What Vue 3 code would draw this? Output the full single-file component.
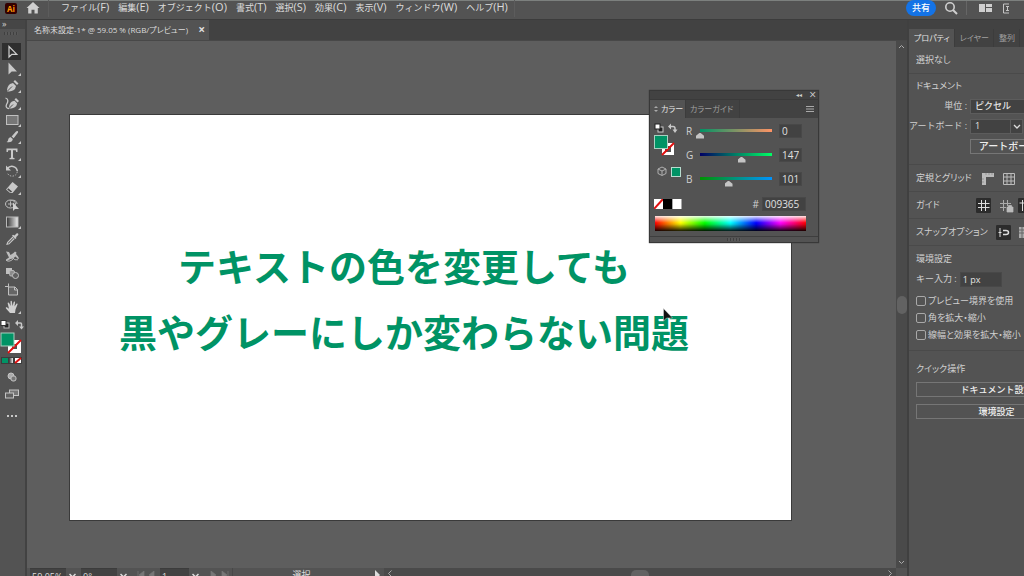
<script setup>
import { ref } from 'vue'

const menus = [
  ['ファイル', 'F'], ['編集', 'E'], ['オブジェクト', 'O'], ['書式', 'T'], ['選択', 'S'],
  ['効果', 'C'], ['表示', 'V'], ['ウィンドウ', 'W'], ['ヘルプ', 'H'],
]

const tools = [
  { name: '選択', sub: false, art: '<path d="M5 2.5v10.5l2.8-2.6h5z" fill="none" stroke="#d0d0d0" stroke-width="1.2"/>' },
  { name: 'ダイレクト選択', sub: true, art: '<path d="M4.5 1.5v12l3.2-3h5.3z" fill="#c8c8c8"/>' },
  { name: 'ペン', sub: true, art: '<path d="M3 13.5c0-3 .7-6 3-7.500l3-1 3 3-1 3c-1.700 2-5 2.500-8 2.500z" fill="#c8c8c8"/><path d="M9.500 3.500l1.500-1.500 3.500 3.500-1.500 1.500z" fill="#c8c8c8"/><path d="M3 13.500L8 8.500" stroke="#535353"/>' },
  { name: '曲線', sub: true, art: '<path d="M5 13.500c0-3 .7-5.500 3-7l2.500-.8 2.700 2.800-1 2.500c-1.700 2-4.200 2.500-7.200 2.500z" fill="#c8c8c8"/><path d="M10.500 4.500l1.500-1.500 3 3-1.500 1.500z" fill="#c8c8c8"/><path d="M5 13.500l4-4" stroke="#535353"/><path d="M1.500 3c3.500 1 2.500 4 1 6.500-1 2 0 4 2.500 4" fill="none" stroke="#c8c8c8" stroke-width="1.300"/>' },
  { name: '長方形', sub: true, art: '<rect x="2.500" y="3.500" width="11.500" height="9" fill="#777" stroke="#c0c0c0"/>' },
  { name: 'ブラシ', sub: true, art: '<path d="M13.500 2c.9.700.7 1.400 0 2.300L9.700 9.200 7.600 7.400 12 2.600c.5-.6 1-.9 1.500-.6z" fill="#c8c8c8"/><path d="M6.800 8.200l2 1.800c0 2.500-3 4-6.300 3 1.700-.6 1.300-2 2-3.300.5-1 1.300-1.500 2.300-1.500z" fill="#c8c8c8"/>' },
  { name: '文字', sub: true, art: '<path d="M2.500 2.500h11v3.500h-1.300l-.5-1.700H9v7.400l1.500.4V13.300h-5v-1.200l1.500-.4V4.300H4.300L3.800 6H2.500z" fill="#c8c8c8"/>' },
  { name: '回転', sub: true, art: '<path d="M3.500 5.500C6 2 12.500 2.700 13.300 8" fill="none" stroke="#c8c8c8" stroke-width="1.500"/><path d="M2 2.500v5h5z" fill="#c8c8c8"/><path d="M13.300 8.500c-.5 5.500-8 6.300-9.900 1.500" fill="none" stroke="#b0b0b0" stroke-dasharray="1.500 1.300"/>' },
  { name: '消しゴム', sub: true, art: '<path d="M8.500 2l5.500 4.500-5.500 6.500H6L2 9.500z" fill="#c8c8c8"/><path d="M4.300 8.200l3.800 3.200-1.300 1.200-3.600-3z" fill="#4a4a4a"/>' },
  { name: 'シェイプ形成', sub: false, art: '<ellipse cx="6.500" cy="7" rx="5" ry="4" fill="none" stroke="#c0c0c0"/><path d="M4 7h6M6.500 4.500v5M6 4c4-2 7 0 7 3" stroke="#b8b8b8" fill="none"/><path d="M9 5.500v8.500l2-2h4z" fill="#d0d0d0"/>' },
  { name: 'グラデーション', sub: true, art: '<rect x="2.500" y="3" width="11.500" height="10" fill="url(#toolGradient)" stroke="#b8b8b8"/>' },
  { name: 'スポイト', sub: false, art: '<path d="M10.500 4.500l2-2c1.500-1 2.500.5 1.500 1.800l-2 2 .5.700-1.200 1-3.300-3.200 1-1z" fill="#c8c8c8"/><path d="M9 6l-5.300 5.300-.7 2 2-.5L10.300 7.500" fill="none" stroke="#c8c8c8" stroke-width="1.100"/>' },
  { name: 'パペットワープ', sub: false, art: '<path d="M2 3.500l3 .5 1.500 3 3-2 1.500-1.500 1.500 1-.5 1.500 2 2.500 1 2-1 .5-2.500-2.500-2.500 2-2.500.5-4 2-.5-1.500 3-2z" fill="#bcbcbc"/><path d="M9 10c2 3 4 1 5 2M2 12c2 2 5 1 7-1" fill="none" stroke="#c8c8c8"/>' },
  { name: 'ブレンド', sub: false, art: '<rect x="2" y="3" width="6" height="6" fill="#c0c0c0"/><rect x="5.500" y="5.500" width="5" height="5.500" rx="1.500" fill="#8c8c8c" stroke="#b8b8b8"/><circle cx="11.500" cy="10.500" r="3" fill="#606060" stroke="#c0c0c0"/>' },
  { name: 'アートボード', sub: false, art: '<path d="M4.500 1.500v3M1 4.500h4" stroke="#c0c0c0"/><path d="M4.500 5h6.500l2.500 2.500v5.500h-9z" fill="#666" stroke="#c0c0c0"/><path d="M10.500 5v3h3" fill="none" stroke="#c0c0c0"/>' },
  { name: '手のひら', sub: true, art: '<path d="M6 14L2 9.500c-.6-.9.4-1.600 1.200-1l1.800 1.200L3.700 4.500c-.2-1 1-1.300 1.400-.4L6.600 7 6.500 2.500c0-1 1.300-1 1.400 0L8.500 7l1.200-4c.3-.9 1.500-.6 1.300.4L10.500 7.500l1.800-2.600c.6-.8 1.500-.2 1.200.6L11.500 10.500 11 14z" fill="#d0d0d0"/>' },
]

const channels = ref([
  { key: 'R', value: 0 },
  { key: 'G', value: 147 },
  { key: 'B', value: 101 },
])
const hex = ref('009365')
const unit = ref('ピクセル')
const board = ref('1')
const keyStep = ref('1 px')
const checks = ref([
  { text: 'プレビュー境界を使用', on: false },
  { text: '角を拡大・縮小', on: false },
  { text: '線幅と効果を拡大・縮小', on: false },
])
</script>

<template>
  <div class="window">
    <div class="app">
      <header class="menubar">
        <span class="logo">Ai</span>
        <button class="icon-btn home" aria-label="ホーム">
          <svg width="14" height="14" viewBox="0 0 14 14"><path d="M7 1l6.500 6h-1.700v5.500H8.500V8.700h-3v3.800H2.200V7H.5z" fill="#cfcfcf" /></svg>
        </button>
        <nav class="menus">
          <button v-for="m in menus" :key="m[1]">{{ m[0] }}<span class="accel">({{ m[1] }})</span></button>
        </nav>
        <div class="right-tools">
          <button class="share">共有</button>
          <button class="icon-btn" aria-label="検索">
            <svg width="14" height="14" viewBox="0 0 14 14"><circle cx="6" cy="6" r="4.200" fill="none" stroke="#cfcfcf" stroke-width="1.600" /><path d="M9 9l4 4" stroke="#cfcfcf" stroke-width="2" /></svg>
          </button>
          <i class="bar"></i>
          <button class="icon-btn" aria-label="ワークスペース">
            <svg width="13" height="10" viewBox="0 0 13 10"><path d="M0 1h6v8H0zM7 1h6v3H7zM7 5h6v4H7z" fill="#cfcfcf" /></svg>
          </button>
          <button class="icon-btn" aria-label="パネル">
            <svg width="8" height="11" viewBox="0 0 8 11"><path d="M7 1H1.500v9H7M4 3.500h3M4 7.500h3M5.500 3.500v4" fill="none" stroke="#c4c4c4" /></svg>
          </button>
        </div>
      </header>

      <div class="workspace">
        <aside class="toolbar">
          <div class="tool-head"><span>»</span><i class="grip"></i></div>
          <button v-for="(t, i) in tools" :key="t.name" class="tool" :class="{ active: i === 0 }" :aria-label="t.name">
            <svg width="16" height="16" viewBox="0 0 16 16" v-html="t.art"></svg>
            <svg v-if="t.sub" class="sub" width="3" height="3" viewBox="0 0 3 3"><path d="M3 0v3H0z" fill="#c8c8c8" /></svg>
          </button>
          <svg class="paint" width="24" height="48" viewBox="0 0 24 48">
            <defs>
              <linearGradient id="toolGradient"><stop offset="0" stop-color="#333" /><stop offset="1" stop-color="#eee" /></linearGradient>
            </defs>
            <rect x="4" y="3" width="5" height="5" fill="#222" stroke="#bbb" />
            <rect x="1" y="0.500" width="5" height="5" fill="#fff" stroke="#333" />
            <path d="M17 3h3.500q1 0 1 1v3" fill="none" stroke="#c8c8c8" stroke-width="1.500" /><path d="M18 0v6l-3-3zM19 6.500h5l-2.500 3z" fill="#c8c8c8" />
            <rect x="8" y="20" width="13" height="13" fill="#fff" /><rect x="12" y="24" width="5" height="5" fill="#535353" /><path d="M8 33L21 20" stroke="#e01010" stroke-width="2" />
            <rect x="1" y="13" width="13" height="13" fill="#009365" stroke="#a8d0c0" />
            <rect x="1" y="37" width="21" height="7" fill="#3c3c3c" />
            <rect x="2" y="38" width="6" height="5" fill="#009365" /><rect x="9" y="38" width="4" height="5" fill="url(#toolGradient)" /><rect x="15" y="38" width="6" height="5" fill="#fff" /><path d="M15 43l6-5" stroke="#e01010" stroke-width="2" />
          </svg>
          <button class="icon-btn low" aria-label="描画モード"><svg width="10" height="10" viewBox="0 0 10 10"><circle cx="4" cy="4" r="3" fill="#aaa" stroke="#c4c4c4" /><rect x="4" y="4" width="5" height="5" rx="2" fill="#777" stroke="#c4c4c4" /></svg></button>
          <button class="icon-btn low" aria-label="スクリーンモード"><svg width="14" height="10" viewBox="0 0 14 10"><rect x="4.500" y="1" width="9" height="5.500" fill="#777" stroke="#c4c4c4" /><rect x=".5" y="4" width="8" height="5" fill="#606060" stroke="#c4c4c4" /></svg></button>
          <button class="icon-btn low" aria-label="その他"><svg width="12" height="4" viewBox="0 0 12 4"><path d="M1 1h2v2H1zM5 1h2v2H5zM9 1h2v2H9z" fill="#c8c8c8" /></svg></button>
        </aside>

        <main class="document">
          <div class="doc-tabs">
            <div class="doc-tab"><span>名称未設定-1* @ 59.05 % (RGB/プレビュー)</span><button aria-label="閉じる">×</button></div>
          </div>
          <div class="stage">
            <div class="canvas">
              <div class="artboard">
                <p class="headline">テキストの色を変更しても<br>黒やグレーにしか変わらない問題</p>
              </div>
              <section class="color-panel">
                <div class="panel-bar"><span>◂◂</span><button aria-label="閉じる">×</button></div>
                <div class="panel-tabs">
                  <button class="on"><svg width="4" height="8" viewBox="0 0 4 8"><path d="M0 3l2-2 2 2zM0 5l2 2 2-2z" fill="#aaa" /></svg>カラー</button>
                  <button>カラーガイド</button>
                  <svg class="burger" width="8" height="8" viewBox="0 0 8 8"><path d="M0 1.500h8M0 4h8M0 6.500h8" stroke="#aaa" /></svg>
                </div>
                <div class="mixer">
                  <svg width="30" height="60" viewBox="0 0 30 60">
                    <rect x="4" y="4" width="5" height="5" fill="#222" stroke="#ccc" /><rect x="1" y="1" width="5" height="5" fill="#fff" stroke="#222" />
                    <path d="M16 3.500h3q2 0 2 2v2" fill="none" stroke="#c8c8c8" stroke-width="1.500" /><path d="M17 .5v6l-3-3zM18.500 6.500h5L21 10z" fill="#c8c8c8" />
                    <rect x="8" y="20" width="12" height="12" fill="#fff" /><rect x="11" y="23" width="6" height="6" fill="#535353" /><path d="M8 32l12-12" stroke="#e01010" stroke-width="2" />
                    <rect x=".5" y="12.500" width="13" height="13" fill="#009365" stroke="#a8d0c0" />
                    <path d="M8 44l4 2v4.500l-4 2-4-2V46zM4 46l4 2 4-2M8 48v4" fill="none" stroke="#b0b0b0" />
                    <rect x="17.500" y="44.500" width="9" height="9" fill="#009365" stroke="#b8dccf" />
                  </svg>
                  <div class="channels">
                    <label v-for="c in channels" :key="c.key" class="channel" :class="c.key">
                      <span>{{ c.key }}</span>
                      <input v-model.number="c.value" type="range" min="0" max="255">
                      <input v-model.number="c.value" class="field" type="text" :aria-label="c.key + ' 値'">
                    </label>
                  </div>
                </div>
                <div class="hex-row">
                  <svg width="28" height="10" viewBox="0 0 28 10"><path d="M0 0h9v10H0z" fill="#fff" /><path d="M0 10L9 0" stroke="#e01010" stroke-width="2" /><path d="M9 0h9v10H9z" fill="#000" /><path d="M18.500 0h9v10h-9z" fill="#fff" /></svg>
                  <label>#<input v-model="hex" class="field" type="text"></label>
                </div>
                <div class="spectrum"></div>
                <div class="panel-foot"><i class="grip"></i></div>
              </section>
              <svg class="pointer" width="10" height="15" viewBox="0 0 10 15"><path d="M.5.500v12.500l3-3h6z" fill="#111" stroke="#ddd" stroke-width=".5" /></svg>
            </div>
            <div class="vscroll">
              <svg width="7" height="5" viewBox="0 0 7 5"><path d="M1 4l2.500-2.500L6 4" fill="none" stroke="#aaa" /></svg>
              <i class="thumb"></i>
              <svg width="7" height="5" viewBox="0 0 7 5"><path d="M1 1l2.500 2.500L6 1" fill="none" stroke="#aaa" /></svg>
            </div>
          </div>
          <footer class="status">
            <span class="box zoom">59.05%</span><svg class="chev" width="7" height="5" viewBox="0 0 7 5"><path d="M.5 1l3 3 3-3" fill="none" stroke="#ddd" stroke-width="1.500" /></svg>
            <span class="box angle">0°</span><svg class="chev" width="7" height="5" viewBox="0 0 7 5"><path d="M.5 1l3 3 3-3" fill="none" stroke="#ddd" stroke-width="1.500" /></svg>
            <svg class="step" width="24" height="8" viewBox="0 0 24 8"><path d="M3 0v8M9 0L4 4l5 4zM19 0l-5 4 5 4z" fill="#777" stroke="#777" stroke-width=".7" /></svg>
            <span class="box page">1</span><svg class="chev" width="7" height="5" viewBox="0 0 7 5"><path d="M.5 1l3 3 3-3" fill="none" stroke="#ddd" stroke-width="1.500" /></svg>
            <svg class="step" width="24" height="8" viewBox="0 0 24 8"><path d="M4 0v8l5-4zM15 0v8l5-4zM21 0v8" fill="#777" stroke="#777" stroke-width=".7" /></svg>
            <span class="mode">選択</span>
            <svg class="play" width="6" height="10" viewBox="0 0 6 10"><path d="M0 0v10l5-5z" fill="#ddd" /></svg>
            <div class="hscroll">
              <svg width="4" height="7" viewBox="0 0 4 7"><path d="M3.500.500l-3 3 3 3" fill="none" stroke="#aaa" /></svg>
              <i class="thumb"></i>
              <svg width="4" height="7" viewBox="0 0 4 7"><path d="M.5.500l3 3-3 3" fill="none" stroke="#aaa" /></svg>
            </div>
          </footer>
        </main>

        <aside class="props">
          <div class="props-inner">
            <div class="props-tabs"><button class="on">プロパティ</button><button>レイヤー</button><button>整列</button></div>
            <section class="sec single">選択なし</section>
            <section class="sec form">
              <h2>ドキュメント</h2>
              <div class="row">
                <label for="unit">単位 :</label>
                <select id="unit" v-model="unit" class="wide"><option>ピクセル</option></select>
              </div>
              <div class="row">
                <label for="board">アートボード :</label>
                <span class="pick">
                  <select id="board" v-model="board"><option>1</option></select>
                  <svg width="13" height="15" viewBox="0 0 13 15"><path d="M.5 1v13" stroke="#5c5c5c" /><path d="M4 6l3 3 3-3" fill="none" stroke="#ddd" stroke-width="1.300" /></svg>
                </span>
              </div>
              <div class="row"><span></span><button class="push">アートボードを編集</button></div>
            </section>
            <section class="sec single">
              定規とグリッド
              <svg class="opt" width="40" height="15" viewBox="0 0 40 15"><path d="M2 2h12v4H6v8H2z" fill="#bbb" /><path d="M6 2v2M9 2v2M12 2v2M2 8h2M2 11h2" stroke="#888" stroke-width=".7" /><path d="M23.500 2.500h11v11h-11zM27 2v12M31 2v12M23 6h12M23 10h12" fill="none" stroke="#bbb" /></svg>
            </section>
            <section class="sec single guides">
              ガイド
              <svg class="opt" width="60" height="15" viewBox="0 0 60 15"><rect width="15" height="15" rx="1" fill="#2c2c2c" /><path d="M5.500 2v11M9.500 2v11M2 5.500h11.500M2 9.500h11.500" stroke="#ddd" /><path d="M27.500 2v11M31.500 2v6M24 5.500h11M24 9.500h6" stroke="#aaa" /><path d="M31 9h6v5h-6zM32.500 9V7.500h3V9" fill="#bbb" stroke="#bbb" stroke-width=".7" /><rect x="42" width="15" height="15" rx="1" fill="#2c2c2c" /><path d="M43.500 5h9M46.500 2v11" stroke="#ddd" /></svg>
            </section>
            <section class="sec single">
              スナップオプション
              <svg class="opt" width="40" height="15" viewBox="0 0 40 15"><rect width="15" height="15" rx="1" fill="#2c2c2c" /><path d="M4 3v9M2.500 7.500h3" stroke="#ddd" /><path d="M7 5.500h3q2.500 0 2.500 2t-2.500 2H7" fill="none" stroke="#ddd" stroke-width="1.500" /><path d="M23 2h12v11H23z" fill="#aaa" /><path d="M26 2v11M29 2v11M23 5h12M23 8h12" stroke="#666" /></svg>
            </section>
            <section class="sec env">
              <h2>環境設定</h2>
              <div class="key"><label for="key">キー入力 :</label><input id="key" v-model="keyStep" type="text"></div>
              <label v-for="c in checks" :key="c.text" class="check"><input v-model="c.on" type="checkbox">{{ c.text }}</label>
            </section>
            <section class="sec quick">
              <h2>クイック操作</h2>
              <button class="push">ドキュメント設定</button>
              <button class="push">環境設定</button>
            </section>
          </div>
        </aside>
      </div>
    </div>
  </div>
</template>

<style>
body { margin: 0; background: #535353; }
</style>

<style scoped>
* { box-sizing: border-box; }
.window { height: 100vh; overflow: hidden; background: #535353; color: #d0d0d0; font-family: "Open Sans", "Noto Sans CJK JP", sans-serif; font-size: 9px; line-height: 12px; font-feature-settings: "palt"; }
.app { display: flex; flex-direction: column; height: calc(100% + 8px); }
button, input, select { font: inherit; font-feature-settings: inherit; color: inherit; margin: 0; padding: 0; border: 0; background: none; white-space: nowrap; }
h2 { margin: 0; font-size: 9px; font-weight: 400; }
svg { display: block; flex: none; }
i { display: block; }

.menubar { display: flex; align-items: center; height: 20px; padding: 0 14px 4px 5px; border-top: 1px solid #7c807e; border-bottom: 1px solid #3c3c3c; flex: none; }
.logo { width: 12px; height: 11px; border-radius: 2px; background: #330000; color: #ff9a00; font-size: 8px; line-height: 11px; font-weight: 700; text-align: center; }
.icon-btn { display: flex; align-items: center; justify-content: center; }
.home { margin-left: 9px; }
.menus { display: flex; gap: 9px; margin-left: 8px; padding: 0 6px 2px 12px; border-left: 1px solid #5c5c5c; border-right: 1px solid #5c5c5c; color: #dcdcdc; font-feature-settings: normal; }
.menus button { font-size: 9px; line-height: 14px; }
.accel { font-size: 11px; }
.right-tools { display: flex; align-items: center; margin-left: auto; gap: 8px; }
.right-tools .icon-btn:last-child { margin-left: 2px; }
.share { width: 30px; height: 16px; border-radius: 8px; background: #1473e6; color: #fff; font-weight: 500; }
.bar { width: 1px; height: 14px; margin-right: 4px; background: #666; }

.workspace { display: flex; flex: 1; min-height: 0; }
.toolbar { display: flex; flex-direction: column; width: 27px; flex: none; border-right: 2px solid #424242; }
.tool-head { height: 23px; flex: none; }
.tool-head span { display: block; height: 9px; padding-left: 2px; background: #464646; font-size: 9px; line-height: 7px; }
.grip { width: 14px; height: 3px; background: repeating-linear-gradient(90deg, #404040 0 1px, #585858 1px 3px); }
.tool-head .grip { margin: 3px 0 0 4px; }
.tool { position: relative; display: flex; align-items: center; justify-content: center; width: 19px; height: 17px; margin-left: 2px; flex: none; }
.tool.active { background: #2f2f2f; }
.sub { position: absolute; right: 0; bottom: 1px; }
.paint { margin-top: 5px; }
.low { height: 17px; width: 23px; flex: none; }
.low:last-child { margin-top: 5px; }

.document { display: flex; flex-direction: column; flex: 1; min-width: 0; }
.doc-tabs { display: flex; height: 21px; flex: none; background: #424242; border-bottom: 1px solid #484848; }
.doc-tab { display: flex; align-items: center; justify-content: space-between; min-width: 182px; padding: 0 4px 0 7px; background: #535353; font-size: 8px; white-space: nowrap; color: #dcdcdc; }
.doc-tab button { font-size: 12px; font-weight: 700; }
.stage { display: flex; flex: 1; min-height: 0; }
.canvas { position: relative; flex: 1; background: #5e5e5e; }
.artboard { position: absolute; left: 42px; top: 73px; width: 723px; height: 407px; background: #fff; border: 1px solid #3a3a3a; }
.headline { margin: 117px 53px 0 0; text-align: center; color: #009365; font-family: "Noto Sans CJK JP", sans-serif; font-feature-settings: normal; font-weight: 700; font-size: 38px; line-height: 66px; white-space: nowrap; }
.pointer { position: absolute; left: 636px; top: 267px; }

.color-panel { position: absolute; left: 622px; top: 49px; width: 170px; background: #535353; border: 1px solid #383838; box-shadow: 0 0 1px #333; }
.panel-bar { display: flex; justify-content: flex-end; align-items: center; gap: 7px; height: 8px; padding-right: 2px; background: #424242; font-size: 6px; }
.panel-bar button { font-size: 12px; line-height: 8px; }
.panel-tabs { display: flex; height: 19px; background: #424242; border-top: 1px solid #3a3a3a; color: #a0a0a0; font-size: 8px; }
.panel-tabs button { padding: 0 6px 0 4px; border-right: 1px solid #3c3c3c; }
.panel-tabs .on { display: flex; align-items: center; gap: 3px; width: 36px; padding: 0 0 0 4px; background: #535353; color: #e4e4e4; }
.burger { margin: 5px 4px 0 auto; }
.mixer { display: flex; padding: 5px 16px 0 4px; height: 76px; }
.channels { flex: 1; min-width: 0; margin: -4px 0 0 2px; }
.channel { display: flex; align-items: center; height: 24px; font-size: 10px; }
.channel span { width: 10px; }
.channel input[type="range"] { appearance: none; flex: 1; min-width: 0; height: 16px; background-repeat: no-repeat; background-position: 4px 6px; background-size: calc(100% - 8px) 3px; }
.R input[type="range"] { background-image: linear-gradient(90deg, #009365, #ff9365); }
.G input[type="range"] { background-image: linear-gradient(90deg, #000065, #00ff65); }
.B input[type="range"] { background-image: linear-gradient(90deg, #009300, #0093ff); }
.channel input::-webkit-slider-thumb { appearance: none; width: 8px; height: 6px; margin-top: 9px; background: #c4c4c4; clip-path: polygon(50% 0, 100% 55%, 100% 100%, 0 100%, 0 55%); }
.field { width: 23px; height: 14px; flex: none; margin-left: 3px; padding: 0 2px; background: #424242; border: 1px solid #484848; color: #e0e0e0; font-size: 10px; line-height: 12px; }
.hex-row { display: flex; align-items: center; justify-content: space-between; height: 14px; padding: 0 12px 0 4px; margin-top: 3px; }
.hex-row label { display: flex; align-items: center; font-size: 10px; }
.hex-row .field { width: 44px; }
.spectrum { height: 15px; margin: 5px 12px 5px 5px; background: linear-gradient(180deg, rgba(255,255,255,.9), rgba(255,255,255,0) 45%, rgba(0,0,0,.1) 55%, rgba(0,0,0,.9)), linear-gradient(90deg, #f00, #ff0 17%, #0f0 33%, #0ff 50%, #00f 67%, #f0f 83%, #f00); }
.panel-foot { display: flex; justify-content: center; align-items: center; height: 6px; border-top: 1px solid #3e3e3e; }

.vscroll { display: flex; flex-direction: column; justify-content: space-between; align-items: center; width: 11px; padding: 3px 0; background: #4a4a4a; }
.thumb { background: #626262; border-radius: 5px; }
.vscroll .thumb { width: 10px; height: 18px; }
.status { display: flex; height: 16px; flex: none; align-items: stretch; padding-left: 3px; background: #535353; color: #ddd; }
.box { padding: 1px 2px 0; background: #424242; border-top: 1px solid #3c3c3c; line-height: 14px; }
.zoom, .angle { width: 36px; }
.page { width: 29px; }
.chev { margin: 5px 5px 0 3px; }
.step { margin: 3px 1px 0 3px; }
.mode { width: 138px; padding-top: 1px; line-height: 12px; text-align: center; border-left: 1px solid #484848; }
.play { margin: 2px 3px 0 5px; }
.hscroll { display: flex; flex: 1; justify-content: space-between; margin-right: 11px; padding: 2px 4px; background: #4a4a4a; }
.hscroll .thumb { width: 18px; height: 11px; }

.props { width: 117px; flex: none; overflow: hidden; border-left: 2px solid #404040; }
.props-inner { width: 170px; }
.props-tabs { display: flex; height: 27px; padding-top: 9px; background: #424242; color: #a0a0a0; font-size: 8px; }
.props-tabs button { padding: 0 4px 0 5px; border-right: 1px solid #3c3c3c; }
.props-tabs .on { background: #535353; color: #e4e4e4; }
.sec { padding: 0 2px 0 7px; border-bottom: 1px solid #4a4a4a; }
.single { display: flex; align-items: center; height: 27px; white-space: nowrap; }
.opt { margin-left: 8px; }
.guides .opt { margin-left: 36px; }
.form { padding-top: 2px; padding-bottom: 8px; padding-left: 0; }
.form h2 { padding-left: 7px; }
.form h2, .row { display: flex; align-items: center; height: 20px; }
.row { gap: 3px; }
.row > :first-child { width: 58px; text-align: right; white-space: nowrap; flex: none; font-feature-settings: normal; }
select, .key input { height: 15px; padding: 0 4px; appearance: none; background: #424242; border: 1px solid #5c5c5c; color: #e4e4e4; }
.wide { flex: 1; font-weight: 500; font-feature-settings: normal; }
.pick { position: relative; }
.pick select { width: 53px; }
.pick svg { position: absolute; right: 0; top: 0; }
.push { display: block; height: 15px; border: 1px solid #767676; color: #eee; font-weight: 500; line-height: 12px; font-feature-settings: normal; }
.row .push { flex: 1; font-size: 10px; }
.env { padding-top: 3px; padding-bottom: 7px; }
.env h2, .key { display: flex; align-items: center; height: 20px; }
.key { gap: 3px; margin-bottom: 3px; font-feature-settings: normal; }
.key input { width: 42px; border-color: #484848; padding: 0 2px; }
.check { display: flex; align-items: center; gap: 2px; height: 17px; white-space: nowrap; }
.check input { appearance: none; width: 10px; height: 10px; border: 1px solid #a8a8a8; border-radius: 2px; }
.quick { display: grid; gap: 7px; padding-top: 12px; border-bottom: 0; }
</style>
